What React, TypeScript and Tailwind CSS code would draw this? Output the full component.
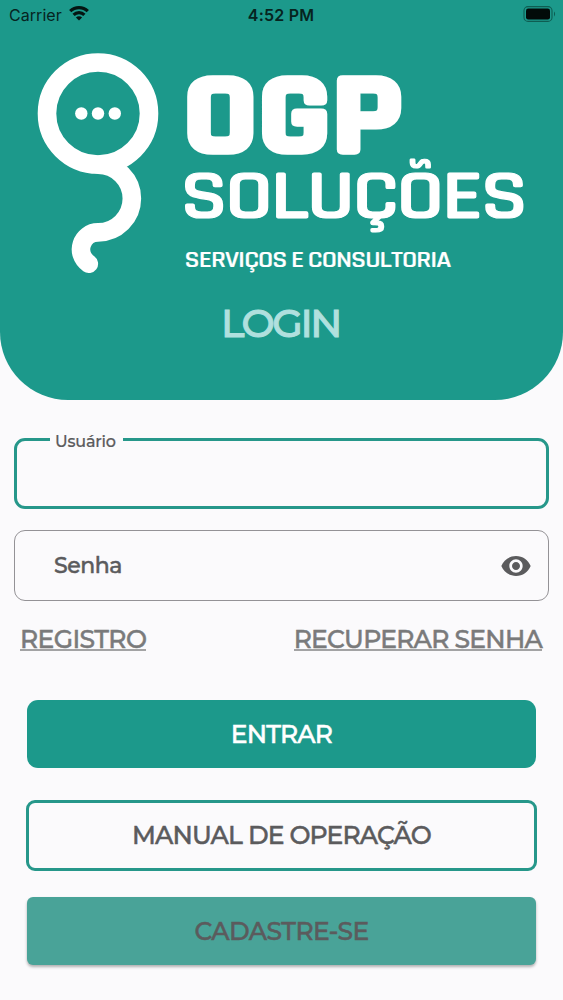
import { MdVisibility } from "react-icons/md";

function StatusBar() {
  return (
    <div className="grid h-[29px] grid-cols-3 items-center pr-[6px] pl-[9px] font-['Inter',sans-serif] text-[16px] leading-none text-[#06241f]">
      <div className="flex items-center gap-[7px]">
        <span className="font-normal tracking-[0.05px]">Carrier</span>
        <svg viewBox="0 0 20 15" className="-mt-[2px] h-[15px] w-[20px]" fill="none" stroke="#041512" strokeWidth="3.2">
          <path d="M1.2 5.2a12.6 12.6 0 0 1 17.6 0" />
          <path d="M4.6 8.8a7.7 7.7 0 0 1 10.8 0" />
          <path d="M10 14.6 6.9 11.5a4.4 4.4 0 0 1 6.2 0z" fill="#041512" stroke="none" />
        </svg>
      </div>
      <span className="-ml-[4px] text-center font-semibold tracking-[0.2px]">4:52 PM</span>
      <svg viewBox="0 0 34 16" className="-mt-[2px] h-[16px] w-[34px] justify-self-end" fill="none">
        <rect x="1" y=".6" width="28" height="14.8" rx="4" stroke="#0e5d52" strokeWidth="1.1" />
        <rect x="3" y="2.6" width="24" height="10.8" rx="2.2" fill="#020b09" />
        <path d="M31 5.6c1.4.7 1.4 4.1 0 4.8z" fill="#0e5d52" />
      </svg>
    </div>
  );
}

function Logo() {
  return (
    <svg viewBox="0 29 563 251" className="h-[251px] w-full" fill="none" stroke="#fff">
      <circle cx="98" cy="113.5" r="51" strokeWidth="18.6" />
      <path
        d="M98 164.7A33.8 33.8 0 0 1 98 232.4C82 232.4 74 253 88.8 263.8"
        strokeWidth="18.6"
        strokeLinecap="round"
        strokeLinejoin="round"
      />
      <g fill="#fff" stroke="none">
        <circle cx="81.3" cy="113.5" r="6.2" />
        <circle cx="98" cy="113.5" r="6.2" />
        <circle cx="114.8" cy="113.5" r="6.2" />
      </g>
      <g fill="#fff" fontFamily="'Rajdhani', 'Chakra Petch', 'Saira', 'Oxanium', Roboto, sans-serif">
        <text x="183" y="152" fontSize="116" fontWeight="700" strokeWidth="5.5" textLength="220" lengthAdjust="spacingAndGlyphs">
          OGP
        </text>
        <text x="180.5" y="218" fontSize="71" fontWeight="600" strokeWidth="1.2" letterSpacing="-2" textLength="345" lengthAdjust="spacingAndGlyphs">
          SOLUÇÕES
        </text>
        <text x="184.5" y="267" fontSize="24" fontWeight="600" strokeWidth="0.2" letterSpacing="-0.8" wordSpacing="-1" textLength="266" lengthAdjust="spacingAndGlyphs">
          SERVIÇOS E CONSULTORIA
        </text>
      </g>
    </svg>
  );
}

export default function App() {
  return (
    <main className="flex h-[1000px] w-full flex-col bg-[#fbfafc] font-['Montserrat','Inter',sans-serif] font-medium text-[#5b5b5d] [-webkit-text-stroke-width:0.5px]">
      <header className="flex h-[400px] flex-col rounded-b-[68px] bg-[#1c998b]">
        <div className="[-webkit-text-stroke-width:0]">
          <StatusBar />
        </div>
        <Logo />
        <h1 className="mt-[19px] pr-[2px] text-center text-[39.5px] leading-[48px] tracking-[-2.4px] text-[#b0e0de] [-webkit-text-stroke-width:1px]">LOGIN</h1>
      </header>

      <form className="flex flex-col px-[14px] pt-[38px]">
        <fieldset className="relative h-[71px] rounded-[11px] border-3 border-[#26978a]">
          <label htmlFor="user" className="absolute -top-[8px] left-[33px] bg-[#fbfafc] pr-[7px] pl-[5px] text-[16px] leading-[18px] tracking-[-0.2px] [-webkit-text-stroke-width:0.2px]">
            Usuário
          </label>
          <input id="user" className="h-full w-full px-10 outline-none" />
        </fieldset>

        <div className="mt-[21px] flex h-[71px] items-center justify-between rounded-[11px] border border-[#949296] pr-[16px] pl-[39px]">
          <span className="text-[22px] leading-none tracking-[-0.45px]">Senha</span>
          <MdVisibility size={32} />
        </div>

        <div className="mt-[24px] flex justify-between pr-[7px] pl-[6px] text-[25px] text-[#7a7a7b]">
          <a className="h-[26px] border-b-2 border-[#a3a3a4] leading-[28px] tracking-[-0.6px]">REGISTRO</a>
          <a className="h-[26px] border-b-2 border-[#a3a3a4] leading-[28px] tracking-[-0.75px]">RECUPERAR SENHA</a>
        </div>
      </form>

      <div className="mt-[49px] flex flex-col px-[27px] text-[25px] tracking-[-0.85px]">
        <button type="button" className="h-[68px] rounded-[11px] bg-[#1c998b] pt-px text-white">ENTRAR</button>
        <button type="button" className="-mx-px mt-[32px] h-[71px] rounded-[9px] border-3 border-[#26978a]">MANUAL DE OPERAÇÃO</button>
        <button type="button" className="mt-[26px] h-[68px] rounded-[6px] bg-[#49a398] pt-px tracking-[-0.55px] shadow-[0_2px_3px_rgba(0,0,0,0.3)]">CADASTRE-SE</button>
      </div>
    </main>
  );
}
